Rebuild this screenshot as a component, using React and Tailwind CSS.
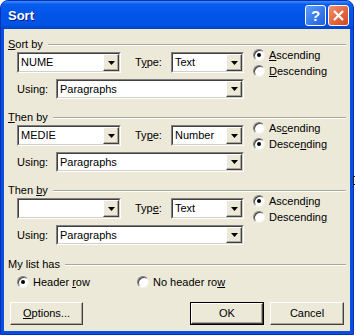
import React from 'react';

const Arrow = () => (
  <svg width="7" height="4" viewBox="0 0 7 4">
    <path d="M0 0h7L3.5 4z" fill="#000" />
  </svg>
);

// classic sunken combo box with a raised drop button
const Combo = ({ className, value }) => (
  <div className={`flex bg-white border border-t-[#808080] border-l-[#808080] border-b-white border-r-white ${className}`}>
    <div className="flex flex-1 min-w-0 items-center border border-t-[#404040] border-l-[#404040] border-b-[#D4D0C8] border-r-[#D4D0C8]">
      <span className="flex-1 pl-[2px] truncate">{value}</span>
      <span className="w-[16px] self-stretch flex items-center justify-center bg-[#ECE9D8] border border-t-white border-l-white border-b-[#404040] border-r-[#404040] shadow-[inset_-1px_-1px_#ACA899]">
        <Arrow />
      </span>
    </div>
  </div>
);

const Radio = ({ checked, children }) => (
  <div className="flex items-center h-[16px]">
    <span className="w-[12px] h-[12px] rounded-full bg-white border border-t-[#808080] border-l-[#808080] border-b-[#F4F3EE] border-r-[#F4F3EE] shadow-[inset_1px_1px_#404040] flex items-center justify-center">
      {checked && <span className="w-[4px] h-[4px] rounded-full bg-black" />}
    </span>
    <span className="ml-[4px]">{children}</span>
  </div>
);

const GroupHeader = ({ children }) => (
  <div className="flex items-center h-[13px] pl-[4px] pr-[4px]">
    <span>{children}</span>
    <span className="flex-1 ml-[5px] h-[2px] border-t border-t-[#ACA899] border-b border-b-white" />
  </div>
);

const U = ({ children }) => <span className="underline underline-offset-[1px]">{children}</span>;

const SortSection = ({ title, field, type, typeLabel, asc, desc, ascending }) => (
  <div className="h-[73px]">
    <GroupHeader>{title}</GroupHeader>
    <div className="flex items-start pl-[13px]">
      <div className="mt-[1px] w-[227px]">
        <div className="flex items-center h-[21px]">
          <Combo className="w-[104px] h-[21px]" value={field} />
          <span className="ml-[14px] w-[36px]">{typeLabel}</span>
          <Combo className="w-[73px] h-[21px]" value={type} />
        </div>
        <div className="flex items-center h-[20px] mt-[6px]">
          <span className="w-[39px]">Using:</span>
          <Combo className="w-[188px] h-[20px]" value="Paragraphs" />
        </div>
      </div>
      <div className="ml-[9px] -mt-[4px]">
        <Radio checked={ascending}>{asc}</Radio>
        <Radio checked={!ascending}>{desc}</Radio>
      </div>
    </div>
  </div>
);

const Button = ({ className, def, children }) => (
  <div className={`h-[23px] ${def ? 'border border-black' : ''} ${className}`}>
    <div className="h-full flex items-center justify-center bg-[#ECE9D8] border border-t-white border-l-white border-b-[#404040] border-r-[#404040] shadow-[inset_-1px_-1px_#ACA899]">
      {children}
    </div>
  </div>
);

export default function App() {
  return (
    <div className="relative w-[356px] h-[336px] bg-white overflow-hidden font-['Liberation_Sans',Arial,sans-serif] text-[11px] leading-[13px] text-black">
      <div className="w-[354px] h-[335px] rounded-t-[8px] bg-[#0A4FE0] flex flex-col border border-[#0831B8]">
        {/* Title bar */}
        <div className="h-[28px] flex items-center rounded-t-[7px] bg-[linear-gradient(to_bottom,#3C8EF8_0%,#0A5CF0_12%,#0055E8_45%,#0052E3_85%,#0042C4_100%)] pl-[7px] pr-[4px]">
          <span className="flex-1 text-white font-bold text-[13px] [text-shadow:1px_1px_#0A1E7A]">Sort</span>
          <span className="w-[21px] h-[21px] rounded-[3px] border border-white flex items-center justify-center bg-[linear-gradient(135deg,#5C9CFA,#1E5FE0)] text-white font-bold text-[15px] leading-none">?</span>
          <span className="ml-[2px] w-[21px] h-[21px] rounded-[3px] border border-white flex items-center justify-center bg-[linear-gradient(135deg,#F0906C,#D8441E)]">
            <svg width="11" height="11" viewBox="0 0 11 11">
              <path d="M1 1l9 9M10 1l-9 9" stroke="#fff" strokeWidth="2.2" />
            </svg>
          </span>
        </div>

        {/* Client area */}
        <div className="mx-[3px] mb-[3px] flex-1 bg-[#ECE9D8] pt-[9px]">
          <SortSection
            title={<><U>S</U>ort by</>}
            field="NUME"
            type="Text"
            typeLabel={<>T<U>y</U>pe:</>}
            asc={<><U>A</U>scending</>}
            desc={<><U>D</U>escending</>}
            ascending
          />
          <SortSection
            title={<><U>T</U>hen by</>}
            field="MEDIE"
            type="Number"
            typeLabel={<>Ty<U>p</U>e:</>}
            asc={<>As<U>c</U>ending</>}
            desc={<>Desce<U>n</U>ding</>}
            ascending={false}
          />
          <SortSection
            title={<>Then <U>b</U>y</>}
            field=""
            type="Text"
            typeLabel={<>Typ<U>e</U>:</>}
            asc={<>Ascend<U>i</U>ng</>}
            desc={<>Descendin<U>g</U></>}
            ascending
          />

          <div className="mt-[1px]">
            <GroupHeader>My list has</GroupHeader>
            <div className="flex mt-[3px] pl-[13px]">
              <div className="w-[120px]">
                <Radio checked>Header <U>r</U>ow</Radio>
              </div>
              <Radio>No header ro<U>w</U></Radio>
            </div>
            <div className="flex mt-[12px] pl-[6px]">
              <Button className="w-[73px]"><span><U>O</U>ptions...</span></Button>
              <Button className="w-[74px] ml-[107px]" def>OK</Button>
              <Button className="w-[74px] ml-[6px]">Cancel</Button>
            </div>
          </div>
        </div>
      </div>
      <span className="absolute left-[353px] top-[176px] w-[2px] h-[9px] border-l border-t border-b border-[#222]" />
    </div>
  );
}
